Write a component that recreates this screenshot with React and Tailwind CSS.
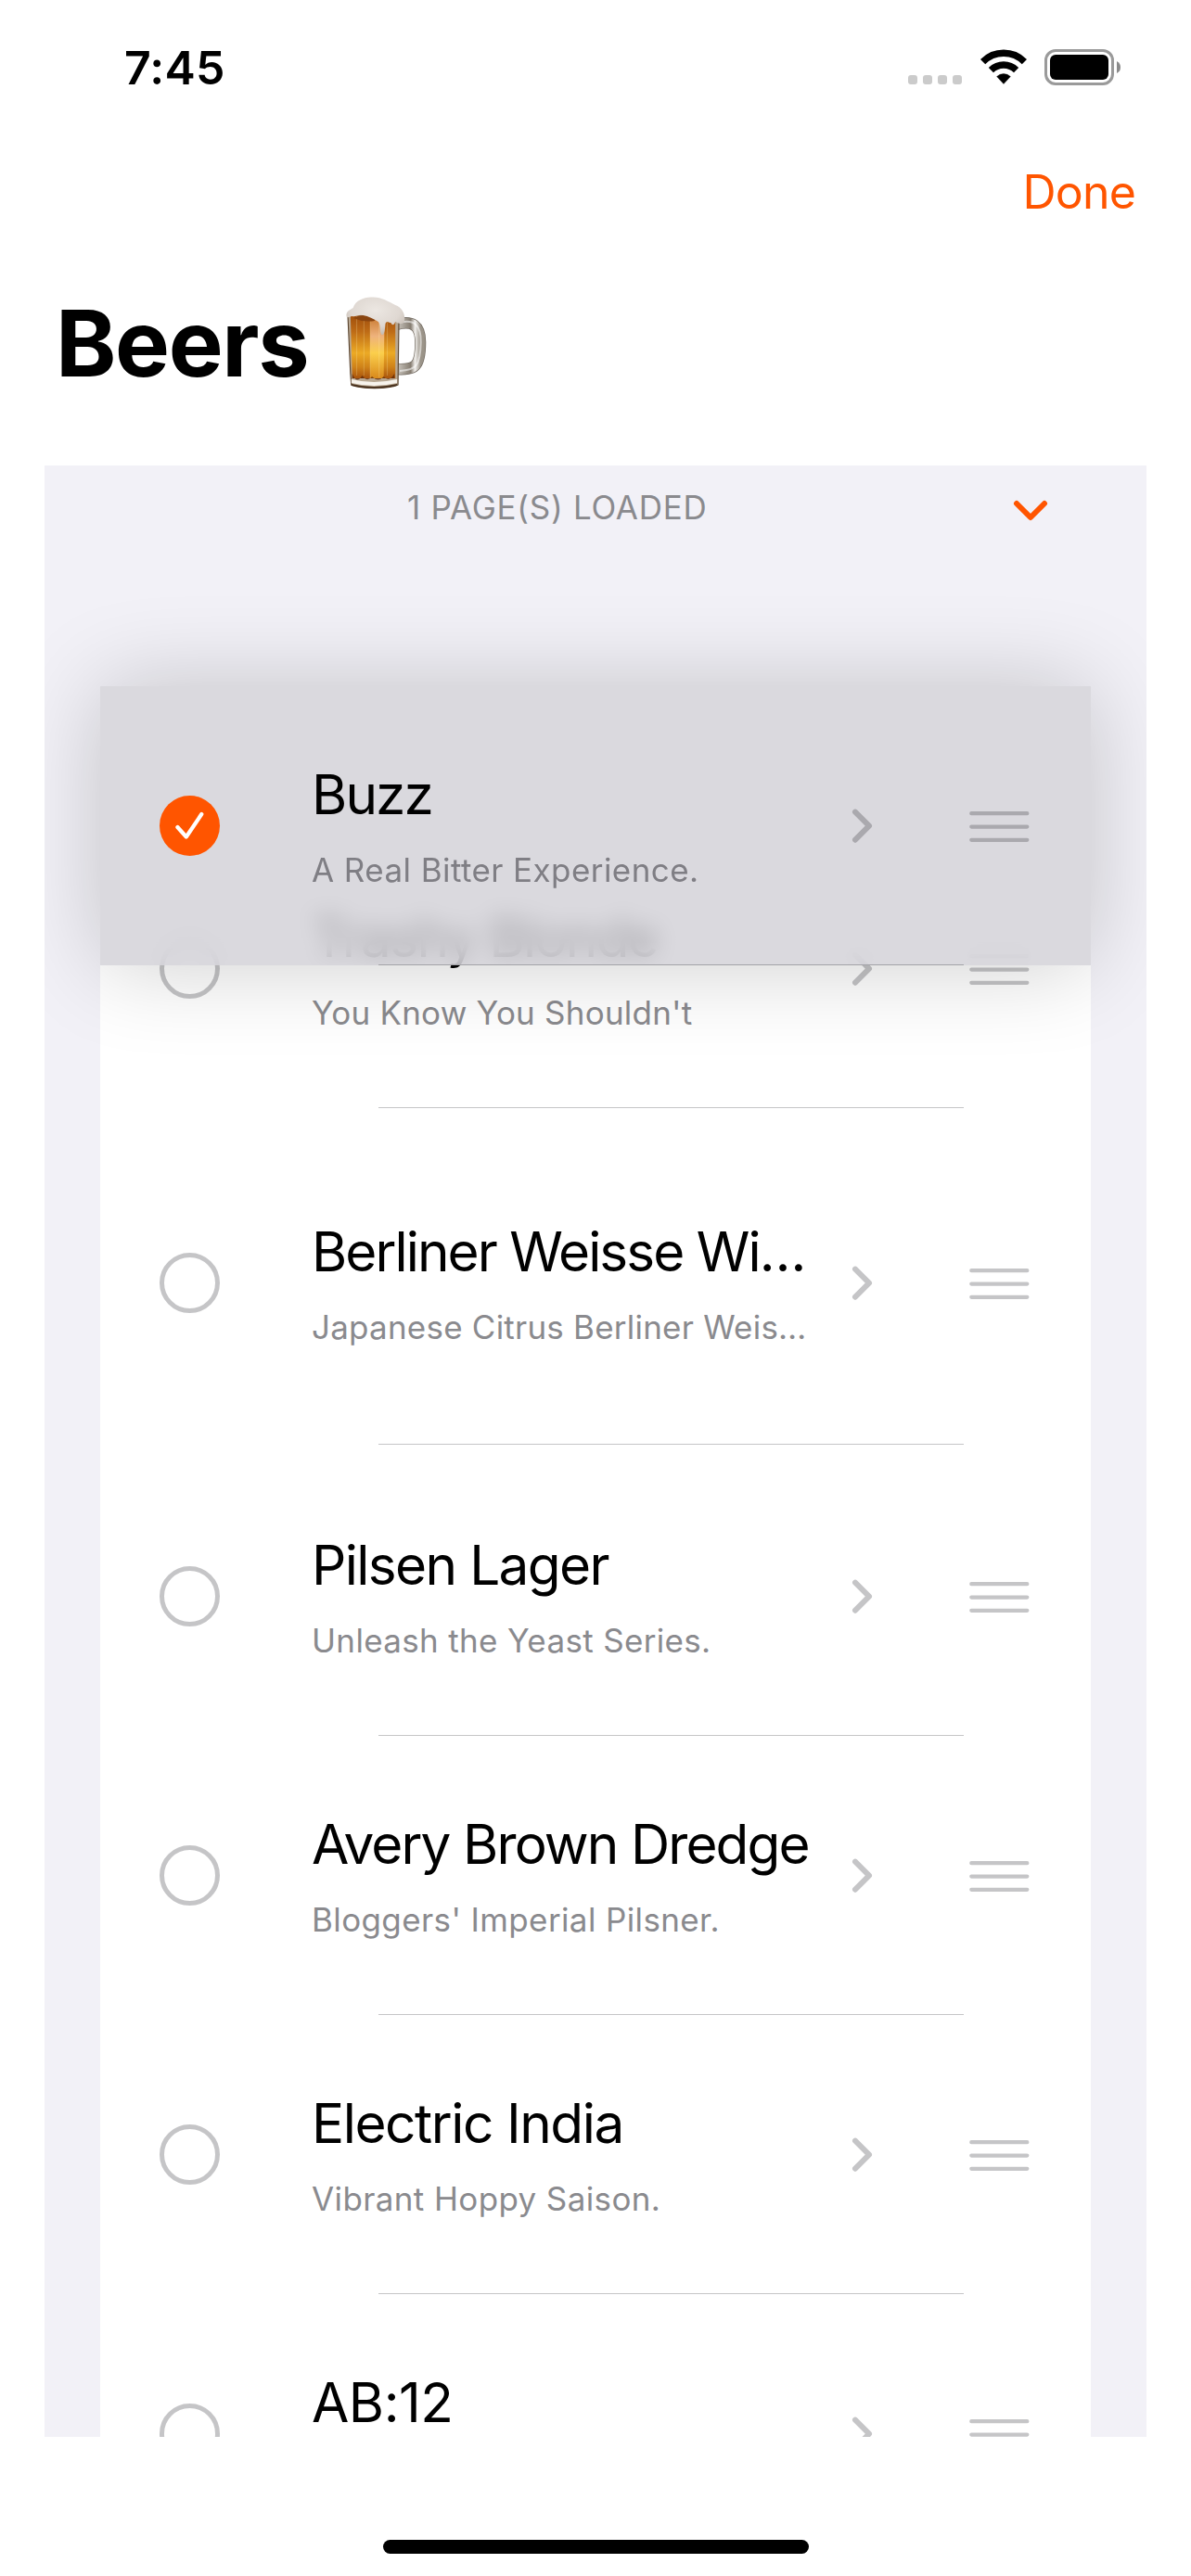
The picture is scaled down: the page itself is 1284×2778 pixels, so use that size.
const rows = [
  { name: "Trashy Blonde", tag: "You Know You Shouldn't", size: "h-[301px]", track: "tracking-[-1.7px]", tagTrack: "tracking-[0.22px]" },
  { name: "Berliner Weisse Wi…", tag: "Japanese Citrus Berliner Weis…", size: "h-[363px] pt-[38px]", track: "tracking-[-1.95px]", tagTrack: "tracking-[0.22px]" },
  { name: "Pilsen Lager", tag: "Unleash the Yeast Series.", size: "h-[314px] pt-[13px]", track: "tracking-[-1.65px]", tagTrack: "tracking-[0.33px]" },
  { name: "Avery Brown Dredge", tag: "Bloggers' Imperial Pilsner.", size: "h-[301px]", track: "tracking-[-1.9px]", tagTrack: "tracking-[0.38px]" },
  { name: "Electric India", tag: "Vibrant Hoppy Saison.", size: "h-[301px]", track: "tracking-[-1.45px]", tagTrack: "tracking-[0.38px]" },
  { name: "AB:12", tag: "", size: "h-[301px]", track: "tracking-[-0.5px]", tagTrack: "tracking-[0.38px]" },
];

function WifiIcon() {
  return (
    <svg className="h-[38px] w-[50px]" viewBox="0 0 50 38">
      <g fill="none" stroke="#000">
        <path d="M2.6 13.6 A31.5 31.5 0 0 1 47.4 13.6" strokeWidth="7.4" />
        <path d="M11.4 22.6 A19.4 19.4 0 0 1 38.6 22.6" strokeWidth="7.4" />
      </g>
      <path d="M17.6 29.6 A10.6 10.6 0 0 1 32.4 29.6 L25 37.4 Z" fill="#000" stroke="#000" strokeWidth="0.4" />
    </svg>
  );
}

function BeerMug() {
  return (
    <svg className="h-[102px] w-[87px] shrink-0" viewBox="0 0 90 102" preserveAspectRatio="none">
      <defs>
        <linearGradient id="ale" x1="0" x2="0" y1="0" y2="1">
          <stop offset="0" stopColor="#a04f0d" />
          <stop offset="0.25" stopColor="#bd6a16" />
          <stop offset="0.6" stopColor="#ecaa25" />
          <stop offset="0.82" stopColor="#cf8219" />
          <stop offset="1" stopColor="#a9540c" />
        </linearGradient>
        <linearGradient id="facet" x1="0" x2="0" y1="0" y2="1">
          <stop offset="0" stopColor="#cb7d35" />
          <stop offset="0.3" stopColor="#eeb27c" />
          <stop offset="0.58" stopColor="#fbcf4c" />
          <stop offset="1" stopColor="#d98a1c" />
        </linearGradient>
        <linearGradient id="grip" x1="0" x2="1" y1="0" y2="0">
          <stop offset="0" stopColor="#cfcbc4" />
          <stop offset="0.6" stopColor="#857c70" />
          <stop offset="0.78" stopColor="#f1efec" />
          <stop offset="1" stopColor="#9b9489" />
        </linearGradient>
        <radialGradient id="foam" cx="0.5" cy="0.35" r="0.7">
          <stop offset="0" stopColor="#ece7e2" />
          <stop offset="0.6" stopColor="#dfd8d2" />
          <stop offset="1" stopColor="#bfb5ab" />
        </radialGradient>
      </defs>
      <path d="M56 31 C74 26 83 32 83 50 C83 77 77 80 56 79" fill="none" stroke="#6f675d" strokeWidth="12.5" />
      <path d="M56 31 C74 26 83 32 83 50 C83 77 77 80 56 79" fill="none" stroke="url(#grip)" strokeWidth="11" />
      <path d="M60 29 C75 25 84 31 83.5 50 C83 76 78 80 60 81" fill="none" stroke="#fff" strokeOpacity="0.55" strokeWidth="2" />
      <path d="M2 20 L59 24 L58 96 C46 101 18 101 6 96 L5 84 Z" fill="#b9a892" stroke="#5c4630" strokeWidth="1.2" />
      <path d="M5 21 L55 24 L55 89 L7 89 Z" fill="url(#ale)" />
      <path d="M27 24 L43 24 L42 89 L27 89 Z" fill="url(#facet)" />
      <path d="M12 22 V86 M20 22 V86 M27 22 V89 M37 26 V88 M46 26 V86" stroke="#fff2b8" strokeOpacity="0.25" strokeWidth="1" />
      <path d="M7 84 Q12 96 18 86 Q24 94 29 87 Q36 94 42 87 Q48 94 54 84 V89 H7 Z" fill="#5c2707" opacity="0.75" />
      <path d="M6 90 Q31 96 57 90 V94 Q31 100 6 94 Z" fill="#f7f3ec" />
      <path d="M6 96 Q31 102 57 96" fill="none" stroke="#4b3420" strokeWidth="1.8" />
      <path d="M8 24 Q24 18 32 23 L32 27 Q20 29 8 24 Z" fill="#8a4510" />
      <path d="M0.5 22 C0 17 3 16 8 13 C10 5 21 1 29 1.5 C39 1 47 6 55 10 C62 12 67 20 65 28 C62 32 57 29 55 28 C54 31 52 33 50 29 C47 29 46 26 44 30 C43 42 42 42 40 42 C37 41 39 30 36 28 C31 25 25 22 19 21 C14 20 10 23 7 22 C4 22 2 25 0.5 22 Z" fill="url(#foam)" />
    </svg>
  );
}

function CheckMark({ checked }) {
  if (!checked) {
    return <div className="size-[65px] shrink-0 rounded-full border-[5px] border-[#c5c5c7]" />;
  }
  return (
    <div className="size-[65px] shrink-0 rounded-full bg-[#ff5500]">
      <svg viewBox="0 0 65 65" fill="none" stroke="#fff" strokeWidth="4.2" strokeLinecap="round" strokeLinejoin="round">
        <path d="M19.4 34 L28.8 44.5 L45.3 20" />
      </svg>
    </div>
  );
}

function RowContent({ name, tag, track, tagTrack, checked, tone }) {
  return (
    <div className="flex h-[301px] w-full shrink-0 items-center pl-[64px]">
      <CheckMark checked={checked} />
      <div className="ml-[99px] flex w-[560px] shrink-0 flex-col">
        <div className={`text-[58.5px] leading-[76px] whitespace-nowrap text-black ${track}`}>{name}</div>
        <div className={`mt-[19px] h-[48px] text-[35px] leading-[48px] whitespace-nowrap ${tagTrack} ${tone === "dark" ? "text-[#7f7e84]" : "text-[#8a8a8e]"}`}>{tag}</div>
      </div>
      <svg className={`ml-[21px] h-[38px] w-[24px] shrink-0 ${tone === "dark" ? "text-[#aaa9ae]" : "text-[#c5c5c7]"}`} viewBox="0 0 24 38" fill="none" stroke="currentColor" strokeWidth="6" strokeLinecap="round" strokeLinejoin="round">
        <path d="M5 3.7 L20 18.7 L5 33.7" />
      </svg>
      <svg className={`ml-[104px] h-[34px] w-[65px] shrink-0 ${tone === "dark" ? "text-[#aaa9ae]" : "text-[#c5c5c7]"}`} viewBox="0 0 65 34" stroke="currentColor" strokeWidth="4.3" strokeLinecap="round">
        <path d="M2.3 3.2 H62.3 M2.3 17.6 H62.3 M2.3 31.8 H62.3" />
      </svg>
    </div>
  );
}

export default function App() {
  return (
    <div className="flex h-[2778px] w-[1284px] flex-col overflow-hidden bg-white font-['Inter',sans-serif]">
      <header className="flex h-[146px] shrink-0 items-start justify-between pr-[76px] pl-[134px]">
        <div className="mt-[43px] text-[50px] leading-[60px] font-semibold tracking-[0.2px] text-black">7:45</div>
        <div className="mt-[53px] flex h-[39px] items-start">
          <div className="mt-[28px] flex gap-[6px]">
            {[0, 1, 2, 3].map((i) => (
              <span key={i} className="size-[10px] rounded-[3px] bg-[#cbcbcb]" />
            ))}
          </div>
          <div className="ml-[19.5px]"><WifiIcon /></div>
          <div className="ml-[19.5px] h-[39px] w-[75px] rounded-[12px] border-[3px] border-[#9a9a9a] p-[3px]">
            <div className="size-full rounded-[6px] bg-black" />
          </div>
          <svg className="mt-[13px] ml-[3px] h-[13px] w-[4px]" viewBox="0 0 4 13"><path d="M0 0 Q4 2 4 6.5 Q4 11 0 13 Z" fill="#8a8a8a" /></svg>
        </div>
      </header>

      <nav className="flex h-[124px] shrink-0 items-start justify-end pt-[31px] pr-[60px]">
        <button className="h-[60px] text-[50px] leading-[60px] tracking-[-0.8px] text-[#ff5500]">Done</button>
      </nav>

      <div className="flex h-[232px] shrink-0 items-start pl-[60px]">
        <h1 className="mt-[40px] w-[313px] text-[99px] leading-[120px] font-bold tracking-[-1.4px] whitespace-nowrap text-black">Beers</h1>
        <div className="mt-[49px]"><BeerMug /></div>
      </div>

      <main className="relative mx-[48px] flex h-[2126px] shrink-0 flex-col overflow-hidden bg-[#f2f1f7] px-[60px]">
        <div className="flex h-[238px] shrink-0 items-start">
          <div className="mt-[21px] ml-[331px] w-[520px] text-[35px] leading-[48px] tracking-[0.72px] whitespace-nowrap text-[#8a8a8e]">1 PAGE(S) LOADED</div>
          <svg className="mt-[37px] ml-[133px] h-[24px] w-[38px]" viewBox="0 0 38 24" fill="none" stroke="#ff5500" strokeWidth="6" strokeLinecap="round" strokeLinejoin="round">
            <path d="M4 4 L19 19 L34 4" />
          </svg>
        </div>

        <div className="flex flex-col bg-white pt-[154px]">
          {rows.map((row) => (
            <div key={row.name} className={`flex shrink-0 flex-col ${row.size}`}>
              <RowContent name={row.name} tag={row.tag} track={row.track} tagTrack={row.tagTrack} />
              <div className="mt-auto h-0">
                <div className="ml-[300px] h-px w-[631px] -translate-y-px bg-[#c5c5c7]" />
              </div>
            </div>
          ))}
        </div>

        {/* Row lifted over the list while it is dragged */}
        <div className="absolute top-[238px] left-[60px] h-[301px] w-[1068px] bg-[rgba(208,207,213,0.79)] shadow-[0_0_100px_rgba(0,0,0,0.2)] backdrop-blur-[12px]">
          <RowContent name="Buzz" tag="A Real Bitter Experience." track="tracking-[-1.9px]" tagTrack="tracking-[0.42px]" checked tone="dark" />
          <div className="ml-[300px] h-px w-[631px] -translate-y-px bg-[#a3a3a8]" />
        </div>
      </main>

      <footer className="flex grow items-start justify-center pt-[111px]">
        <div className="h-[15px] w-[459px] rounded-full bg-black" />
      </footer>
    </div>
  );
}
